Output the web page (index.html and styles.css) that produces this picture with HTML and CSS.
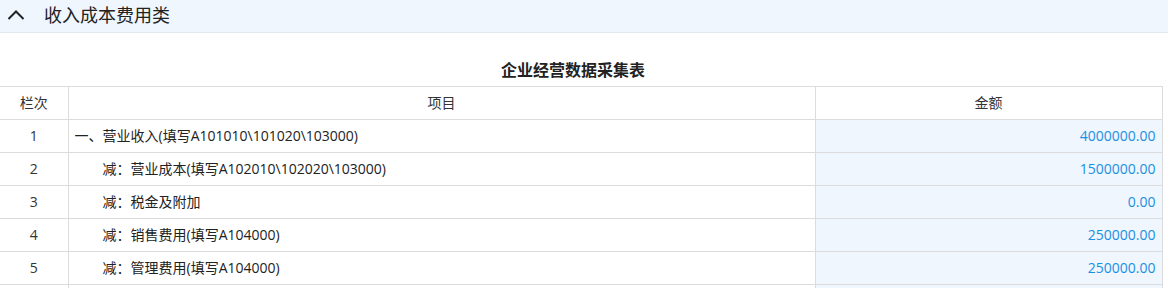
FILE: index.html
```html
<!DOCTYPE html>
<html lang="zh-CN">
<head>
<meta charset="utf-8">
<link rel="stylesheet" href="styles.css">
</head>
<body>
<div class="panel-head">
  <svg class="chev" width="18" height="10" viewBox="0 0 18 10"><path d="M1.5 9 L9 1.5 L16.5 9" fill="none" stroke="#222" stroke-width="2"/></svg>
  <span class="panel-title">收入成本费用类</span>
</div>
<div class="sheet">
  <h2 class="sheet-title">企业经营数据采集表</h2>
  <table class="grid">
    <colgroup><col class="c-no"><col class="c-item"><col class="c-amt"></colgroup>
    <thead>
      <tr><th>栏次</th><th>项目</th><th>金额</th></tr>
    </thead>
    <tbody>
      <tr><td class="no">1</td><td class="item">一、营业收入(填写A101010\101020\103000)</td><td class="amt">4000000.00</td></tr>
      <tr><td class="no">2</td><td class="item sub">减：营业成本(填写A102010\102020\103000)</td><td class="amt">1500000.00</td></tr>
      <tr><td class="no">3</td><td class="item sub">减：税金及附加</td><td class="amt">0.00</td></tr>
      <tr><td class="no">4</td><td class="item sub">减：销售费用(填写A104000)</td><td class="amt">250000.00</td></tr>
      <tr><td class="no">5</td><td class="item sub">减：管理费用(填写A104000)</td><td class="amt">250000.00</td></tr>
      <tr><td class="no"></td><td class="item sub"></td><td class="amt"></td></tr>
    </tbody>
  </table>
</div>
</body>
</html>
```

FILE: styles.css
```css
html, body {
  margin: 0;
  padding: 0;
  background: #fff;
  font-family: "Open Sans", "Noto Sans CJK SC", sans-serif;
  color: #333;
  overflow: hidden;
}
.panel-head {
  display: flex;
  align-items: center;
  height: 33px;
  background: #f0f6fd;
  border-bottom: 1px solid #e2e8f0;
  box-sizing: border-box;
}
.chev {
  margin-left: 7px;
  margin-top: -3px;
}
.panel-title {
  margin-left: 19px;
  font-size: 18px;
  color: #222;
  line-height: 1;
  margin-top: -2px;
}
.sheet {
  width: 1162px;
}
.sheet-title {
  margin: 0;
  height: 53px;
  padding: 26px 16px 0 0;
  box-sizing: border-box;
  text-align: center;
  font-size: 16px;
  font-weight: bold;
  color: #222;
  line-height: 22px;
}
.grid {
  width: 1162px;
  border-collapse: collapse;
  table-layout: fixed;
  font-size: 14px;
}
.c-no { width: 68px; }
.c-item { width: 747px; }
.c-amt { width: 347px; }
.grid th, .grid td {
  border: 1px solid #dcdcdc;
  height: 33px;
  padding: 0 6px;
  box-sizing: border-box;
  line-height: 20px;
}
.grid th {
  font-weight: normal;
  color: #333;
  text-align: center;
}
.grid tr > :first-child { border-left: none; }
.no { text-align: center; color: #333; }
.item { color: #222; }
.item.sub { padding-left: 34px; }
.amt {
  background: #eff6fe;
  color: #1b8fe0;
  text-align: right;
}
```
